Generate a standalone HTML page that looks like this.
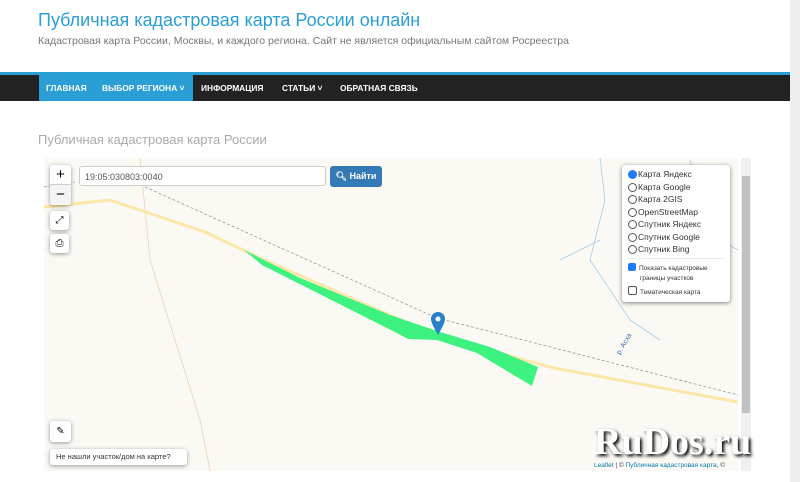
<!DOCTYPE html>
<html><head><meta charset="utf-8"><style>
body{margin:0;width:800px;height:482px;overflow:hidden;background:#fff;font-family:"Liberation Sans",sans-serif;position:relative}
.t{position:absolute;left:38px;top:10px;font-size:18px;color:#2a9fd6;white-space:nowrap}
.s{position:absolute;left:38px;top:35px;font-size:10.5px;color:#777;white-space:nowrap}
.bl{position:absolute;left:0;top:72px;width:790px;height:3px;background:#2a9fd6}
.nav{position:absolute;left:0;top:75px;width:790px;height:26px;background:#222}
.nav span{position:absolute;top:0;height:26px;line-height:26px;color:#fff;font-size:8.4px;font-weight:bold;white-space:nowrap}
.h{position:absolute;left:38px;top:132px;font-size:13px;color:#aaa;white-space:nowrap}
.rs{position:absolute;left:790px;top:0;width:10px;height:482px;background:#eee}
.ctl{position:absolute;background:#fff;border-radius:3px;box-shadow:0 1px 4px rgba(0,0,0,.4)}
.lay{position:absolute;left:622px;top:165px;width:108px;height:137px;background:#fff;border-radius:3px;box-shadow:0 1px 4px rgba(0,0,0,.5);font-size:8.5px;color:#333}
.lay div{position:absolute;left:6px;white-space:nowrap}
.r{display:inline-block;width:7px;height:7px;border:1px solid #555;border-radius:50%;vertical-align:-2px;margin-right:1px}
</style></head><body>
<div class="t">Публичная кадастровая карта России онлайн</div>
<div class="s">Кадастровая карта России, Москвы, и каждого региона. Сайт не является официальным сайтом Росреестра</div>
<div class="bl"></div>
<div class="nav">
<div style="position:absolute;left:39px;top:0;width:154px;height:26px;background:#2a9fd6"></div>
<span style="left:46px">ГЛАВНАЯ</span>
<span style="left:102px">ВЫБОР РЕГИОНА ˅</span>
<span style="left:201px">ИНФОРМАЦИЯ</span>
<span style="left:282px">СТАТЬИ ˅</span>
<span style="left:340px">ОБРАТНАЯ СВЯЗЬ</span>
</div>
<div class="h">Публичная кадастровая карта России</div>
<div class="rs"></div>
<svg style="position:absolute;left:44px;top:158px" width="694" height="313" viewBox="44 158 694 313">
<rect x="44" y="158" width="694" height="313" fill="#fbf9f3"/>
<path d="M140 158 L150 260 L200 420 L210 471" stroke="#f0d0b8" fill="none" stroke-width="0.8"/>
<path d="M44 187 L75 182 M145 187 L437 318 L738 395" stroke="#999" stroke-dasharray="3,2" fill="none" stroke-width="0.8"/>
<path d="M44 207 L110 200 L205 232 L260 258 L437 336 L554 368 L738 402" stroke="#fbe7a8" fill="none" stroke-width="3"/>
<path d="M244 250 L300 278 L390 315 L440 332 L490 347 L538 367 L532 386 L477 353 L437 340 L408 339 L395 332 L262 265 Z" fill="#3df27e"/>
<path d="M600 158 L605 200 L590 260 L630 320 L660 340 M690 160 L700 200 L720 240 L738 250 M650 180 L680 230 L700 280 M560 260 L600 240" stroke="#a9cde8" fill="none" stroke-width="0.8"/>
<text x="620" y="355" font-size="7" fill="#3a6fb5" transform="rotate(-60 620 355)">р. Асха</text>
<path d="M438 335 C433 326 431 322 431 319 A7 7 0 0 1 445 319 C445 322 443 326 438 335Z" fill="#2a81cb"/>
<circle cx="438" cy="319" r="2.5" fill="#fff"/>
</svg>
<div class="ctl" style="left:50px;top:165px;width:21px;height:40px"><div style="text-align:center;font-size:15px;line-height:19px;border-bottom:1px solid #ccc">+</div><div style="text-align:center;font-size:15px;line-height:19px;background:#f4f4f4">−</div></div>
<div class="ctl" style="left:50px;top:211px;width:19px;height:19px;font-size:10px;text-align:center;line-height:19px">⤢</div>
<div class="ctl" style="left:50px;top:234px;width:19px;height:19px;font-size:10px;text-align:center;line-height:19px">⎙</div>
<div style="position:absolute;left:79px;top:166px;width:247px;height:20px;background:#fff;border:1px solid #ccc;border-radius:3px;font-size:9px;color:#555;line-height:20px;padding-left:5px;box-sizing:border-box">19:05:030803:0040</div>
<div style="position:absolute;left:330px;top:166px;width:52px;height:21px;background:#337ab7;border-radius:3px;color:#fff;font-size:9px;font-weight:bold;line-height:21px;text-align:center">🔍︎ Найти</div>
<div class="lay">
<div style="top:4px"><span class="r" style="background:#1e7bff;border-color:#1e7bff"></span>Карта Яндекс</div>
<div style="top:17px"><span class="r"></span>Карта Google</div>
<div style="top:29px"><span class="r"></span>Карта 2GIS</div>
<div style="top:42px"><span class="r"></span>OpenStreetMap</div>
<div style="top:54px"><span class="r"></span>Спутник Яндекс</div>
<div style="top:67px"><span class="r"></span>Спутник Google</div>
<div style="top:79px"><span class="r"></span>Спутник Bing</div>
<div style="top:93px;left:4px;width:100px;border-top:1px solid #eee"></div>
<div style="top:98px;font-size:6.5px;line-height:10px"><span style="display:inline-block;width:8px;height:8px;background:#1e7bff;border-radius:2px;vertical-align:-1px;margin-right:3px"></span>Показать кадастровые<br><span style="margin-left:12px">границы участков</span></div>
<div style="top:121px;font-size:6.5px"><span style="display:inline-block;width:7px;height:7px;border:1px solid #555;border-radius:2px;vertical-align:-1px;margin-right:3px"></span>Тематическая карта</div>
</div>
<div class="ctl" style="left:50px;top:421px;width:21px;height:21px;font-size:10px;text-align:center;line-height:21px">✎</div>
<div class="ctl" style="left:50px;top:449px;width:131px;height:16px;font-size:7.5px;color:#333;line-height:16px;padding-left:6px">Не нашли участок/дом на карте?</div>
<div style="position:absolute;left:594px;top:462px;font-size:6.5px;color:#333;background:rgba(255,255,255,.7);white-space:nowrap"><span style="color:#0078a8">Leaflet</span> | © <span style="color:#0078a8">Публичная кадастровая карта</span>, ©</div>
<div style="position:absolute;left:741px;top:158px;width:10px;height:313px;background:#f0f0f0"><div style="position:absolute;left:1px;top:18px;width:8px;height:237px;background:#c1c1c1"></div></div>
<div style="position:absolute;left:594px;top:420px;font-size:38px;font-weight:bold;font-family:'Liberation Serif',serif;color:#fff;text-shadow:2px 2px 3px #000;white-space:nowrap">RuDos.ru</div>
</body></html>
